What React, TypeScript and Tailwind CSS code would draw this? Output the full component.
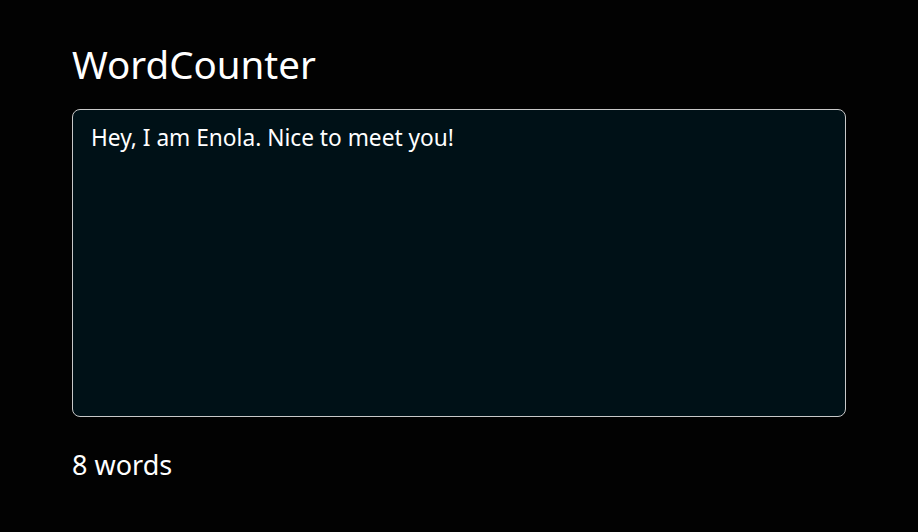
import React, { useState } from 'react';

const countWords = (text: string) => text.split(/\s+/).filter((w) => w.length > 0).length;

const App: React.FC = () => {
  const [text, setText] = useState('Hey, I am Enola. Nice to meet you!');

  return (
    <div
      className="min-h-screen bg-[#020202] text-white px-[72px] pt-[40px]"
      style={{ fontFamily: '"Segoe UI", "Noto Sans", sans-serif' }}
    >
      <h1 className="text-[38.5px] leading-[48px] font-normal">WordCounter</h1>
      <textarea
        value={text}
        onChange={(e) => setText(e.target.value)}
        className="mt-[21px] block w-[774px] h-[308px] resize-none rounded-lg border border-[#c8c8c8] bg-[#001117] px-[18px] py-[12px] text-[22.7px] leading-[32px] text-white outline-none"
      />
      <p className="mt-[31px] text-[27px] leading-[34px]">{countWords(text)} words</p>
    </div>
  );
};

export default App;
